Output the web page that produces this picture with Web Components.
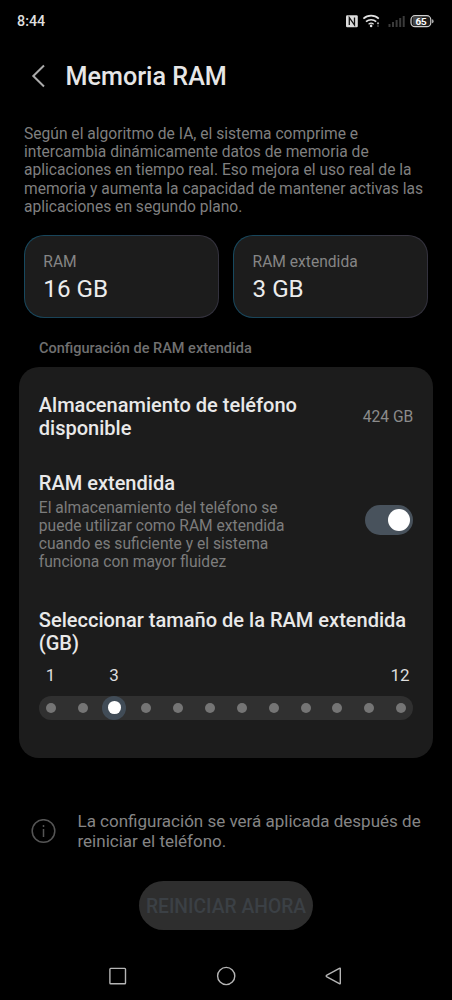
<!DOCTYPE html>
<html lang="es">
<head>
<meta charset="utf-8">
<title>Memoria RAM</title>
<style>
html,body{margin:0;background:#000}
body{width:452px;height:1000px;overflow:hidden;font-family:Roboto,"Liberation Sans",sans-serif}
</style>
</head>
<body>
<ram-screen></ram-screen>
<script>
const define = (name, html) => {
  const t = document.createElement('template');
  t.innerHTML = html;
  customElements.define(name, class extends HTMLElement {
    constructor() {
      super();
      this.attachShadow({ mode: 'open' }).appendChild(t.content.cloneNode(true));
    }
  });
};

define('status-bar', `
<style>
:host{display:flex;justify-content:space-between;height:42px;padding:0 18px 0 17px;box-sizing:border-box;color:#dedede}
span{font-size:14.3px;font-weight:500;line-height:42px}
svg{display:block}
</style>
<span>8:44</span>
<svg width="90" height="42" viewBox="344 0 90 42">
  <rect x="346" y="15.300" width="11.800" height="12" rx="1.300" fill="#dcdcdc"/>
  <path d="M349.300 25v-7.400l5.200 7.400v-7.400" fill="none" stroke="#111" stroke-width="1.300"/>
  <g fill="none" stroke="#e2e2e2" stroke-width="1.700">
    <path d="M363.400 18.600a11.500 11.500 0 0 1 15.400 0"/>
    <path d="M366 21.700a7.600 7.600 0 0 1 10.200 0"/>
    <path d="M368.600 24.200a4 4 0 0 1 5 0" stroke-width="1.300"/>
  </g>
  <circle cx="371.100" cy="25.900" r="1.300" fill="#e2e2e2"/>
  <circle cx="378" cy="23.300" r="1.100" fill="#aaa"/><circle cx="378" cy="26" r="1" fill="#444"/>
  <g fill="#3b3b3b"><rect x="388.500" y="24" width="2" height="3"/><rect x="392" y="22" width="2" height="5"/><rect x="395.600" y="20" width="2" height="7"/><rect x="399.200" y="18" width="2" height="9"/><rect x="402.700" y="16" width="2" height="11"/></g>
  <rect x="411" y="15.700" width="19.800" height="11" rx="4" fill="#1c1c1c" stroke="#cfcfcf" stroke-width="1.200"/>
  <path d="M413 17h9v8.500h-9z" fill="#444"/>
  <path d="M432.200 19.300q1.300 0 1.300 2t-1.300 2z" fill="#cfcfcf"/>
  <text x="421" y="24.700" text-anchor="middle" font-size="9.800" font-weight="700" fill="#fff">65</text>
</svg>`);

define('title-bar', `
<style>
:host{display:flex;align-items:center;gap:19.600px;height:68px;padding-left:31px;color:#e6e6e6}
h1{margin:0;padding-top:2px;font-size:25.150px;font-weight:500;line-height:30px}
svg{display:block}
</style>
<svg width="15" height="24" viewBox="0 0 15 24"><path d="M13 1.500L2.300 12 13 22.500" fill="none" stroke="#aaa" stroke-width="2"/></svg>
<h1><slot></slot></h1>`);

define('memory-tile', `
<style>
:host{display:block;flex:1;height:83px;box-sizing:border-box;padding:16.500px 0 0 18.300px;border:1px solid transparent;border-radius:20px;
background:linear-gradient(#1c1c1c,#1c1c1c) padding-box,linear-gradient(100deg,#174a60,#1c3c50 45%,#37343f 75%,#32313d) border-box}
.l{font-size:15.600px;line-height:18px;color:#858585}
.v{font-size:24.200px;line-height:28px;margin-top:4px;color:#ececec}
</style>
<div class="l"><slot name="label"></slot></div><div class="v"><slot></slot></div>`);

define('setting-row', `
<style>
:host{display:flex;justify-content:space-between;align-items:center}
.t{font-size:20.050px;font-weight:500;line-height:23.200px;color:#e9e9e9;white-space:nowrap}
.d{font-size:15.600px;line-height:18.250px;color:#7c7c7c;white-space:nowrap}
.d ::slotted(span){display:block;padding-top:3.200px}
.e{font-size:15.600px;color:#8b8b8b}
</style>
<div><div class="t"><slot></slot></div><div class="d"><slot name="desc"></slot></div></div>
<div class="e"><slot name="end"></slot></div>`);

define('toggle-switch', `
<style>
:host{display:flex;justify-content:flex-end;align-items:center;width:48.500px;height:29.500px;margin-bottom:4px;box-sizing:border-box;padding-right:3.200px;border-radius:15px;background:#48525c}
i{width:22.400px;height:22.400px;border-radius:50%;background:#fff}
</style><i></i>`);

customElements.define('step-slider', class extends HTMLElement {
  connectedCallback() {
    const value = +this.getAttribute('value'), max = +this.getAttribute('max');
    const steps = Array.from({ length: max }, (_, i) => i + 1);
    const label = n => n === 1 || n === value || n === max ? n : '';
    this.attachShadow({ mode: 'open' }).innerHTML = `
<style>
:host{display:block}
div{display:flex;justify-content:space-between}
.labels{height:20px;line-height:20px;font-size:17px;color:#dedede;margin:0 1px 0 -.3px}
.labels span,.track span{width:24px;display:flex;justify-content:center;align-items:center}
.track{margin-top:11px;height:24px;border-radius:12px;background:#303030}
i{width:10px;height:10px;border-radius:50%;background:#757575}
.on{border-radius:50%;background:#414c57}
.on i{width:12.600px;height:12.600px;background:#fff}
</style>
<div class="labels">${steps.map(n => `<span>${label(n)}</span>`).join('')}</div>
<div class="track">${steps.map(n => `<span class="${n === value ? 'on' : ''}"><i></i></span>`).join('')}</div>`;
  }
});

define('settings-card', `
<style>
:host{display:block;height:391.500px;box-sizing:border-box;margin:0 19.400px;padding:27.200px 19.400px 0;border-radius:20px;background:#1c1c1c}
</style><slot></slot>`);

define('info-note', `
<style>
:host{display:flex;align-items:center;gap:21.500px;padding-left:31px;font-size:17px;line-height:20px;color:#858585;white-space:nowrap}
svg{display:block}
</style>
<svg width="25" height="25" viewBox="0 0 25 25"><circle cx="12.500" cy="12" r="11.300" fill="none" stroke="#555" stroke-width="1.500"/><path d="M12.500 10v8M12.500 6v2" stroke="#555" stroke-width="1.500"/></svg>
<div><slot></slot></div>`);

define('pill-button', `
<style>
:host{display:block}
button{display:block;width:174px;height:48.500px;margin:0 auto;padding:3px 0 0;box-sizing:border-box;border:0;border-radius:25px;background:#2e2e2e;color:#3b4045;font:500 19.300px/46px Roboto,sans-serif;white-space:nowrap}
</style><button><slot></slot></button>`);

define('nav-bar', `
<style>:host{display:flex;justify-content:center}svg{display:block}</style>
<svg width="452" height="48" viewBox="0 952 452 48" fill="none" stroke="#b5b5b5" stroke-width="1.400" stroke-linejoin="round">
<rect x="109.900" y="968.400" width="15.600" height="15.400" rx=".8"/><circle cx="226.200" cy="976" r="8.600"/><path d="M340.300 968.800v14.400q0 1-.9.500l-12.500-6.800q-1.500-.9 0-1.800l12.500-6.800q.9-.5.900.5z"/>
</svg>`);

define('ram-screen', `
<style>
:host{display:flex;flex-direction:column;height:1000px;background:#000}
.intro{margin:14.900px 0 0 24px;font-size:15.600px;line-height:18.250px;color:#7f7f7f;white-space:nowrap}
.tiles{display:flex;gap:14.500px;margin:18.900px 24px 0}
.caption{margin:21.800px 0 0 39px;height:18px;line-height:18px;font-size:14.520px;font-weight:500;color:#707070}
settings-card{margin-top:8.900px}
.ext{margin-top:32px}
.size{margin-top:36.800px}
step-slider{margin-top:9.600px}
info-note{margin-top:53.200px}
pill-button{margin-top:29.700px}
nav-bar{margin-top:auto}
</style>
<status-bar></status-bar>
<title-bar>Memoria RAM</title-bar>
<div class="intro">Según el algoritmo de IA, el sistema comprime e<br>intercambia dinámicamente datos de memoria de<br>aplicaciones en tiempo real. Eso mejora el uso real de la<br>memoria y aumenta la capacidad de mantener activas las<br>aplicaciones en segundo plano.</div>
<div class="tiles">
<memory-tile><span slot="label">RAM</span>16 GB</memory-tile>
<memory-tile><span slot="label">RAM extendida</span>3 GB</memory-tile>
</div>
<div class="caption">Configuración de RAM extendida</div>
<settings-card>
<setting-row>Almacenamiento de teléfono<br>disponible<span slot="end">424 GB</span></setting-row>
<setting-row class="ext">RAM extendida<span slot="desc">El almacenamiento del teléfono se<br>puede utilizar como RAM extendida<br>cuando es suficiente y el sistema<br>funciona con mayor fluidez</span><toggle-switch slot="end"></toggle-switch></setting-row>
<setting-row class="size">Seleccionar tamaño de la RAM extendida<br>(GB)</setting-row>
<step-slider value="3" max="12"></step-slider>
</settings-card>
<info-note>La configuración se verá aplicada después de<br>reiniciar el teléfono.</info-note>
<pill-button>REINICIAR AHORA</pill-button>
<nav-bar></nav-bar>`);
</script>
</body>
</html>
